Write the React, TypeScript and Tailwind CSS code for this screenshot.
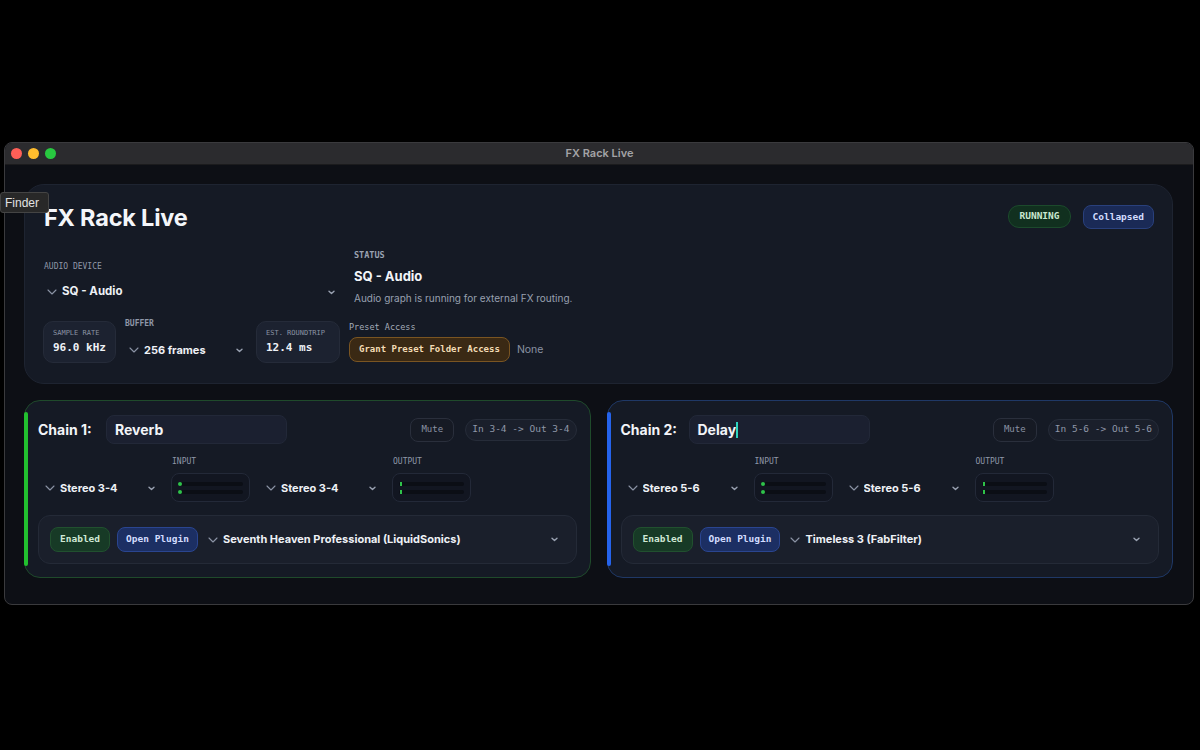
import React from 'react';

const mono = "font-['DejaVu_Sans_Mono',monospace]";

function ChevronLeft() {
  return (
    <svg width="10" height="6" viewBox="0 0 10 6" className="shrink-0">
      <path d="M1 1l4 4 4-4" fill="none" stroke="#8b93a5" strokeWidth="1.1" strokeLinecap="round" strokeLinejoin="round" />
    </svg>
  );
}

function ChevronSmall() {
  return (
    <svg width="7" height="5" viewBox="0 0 7 5" className="shrink-0">
      <path d="M1 1.2l2.5 2.3L6 1.2" fill="none" stroke="#9aa2b2" strokeWidth="1.4" strokeLinecap="round" strokeLinejoin="round" />
    </svg>
  );
}

interface SelectProps {
  value: string;
  className?: string;
  textClass?: string;
}

function Select({ value, className = '', textClass = 'text-[12px]' }: SelectProps) {
  return (
    <div className={`flex items-center gap-[5px] pl-[4px] pr-[4px] h-[26px] ${className}`}>
      <ChevronLeft />
      <span className={`flex-1 font-bold text-[#eef1f6] truncate ${textClass}`}>{value}</span>
      <ChevronSmall />
    </div>
  );
}

function Meter({ label, thin }: { label: string; thin?: boolean }) {
  return (
    <div className="flex flex-col w-[79px]">
      <span className={`${mono} text-[8px] text-[#8f97a8] ml-[1px] mb-[6px] leading-[10px]`}>{label}</span>
      <div className="h-[29px] rounded-lg bg-[#121621] border border-[#232938] flex flex-col justify-center gap-[4px] px-[6px]">
        {[0, 1].map((i) => (
          <div key={i} className="h-[4px] rounded-full bg-[#0b0e15] flex items-center">
            <div className={thin ? 'h-[4px] w-[2px] ml-[1px] bg-[#2fc24a]' : 'h-[4px] w-[4px] rounded-full bg-[#2fc24a]'} />
          </div>
        ))}
      </div>
    </div>
  );
}

interface ChainProps {
  index: number;
  name: string;
  channels: string;
  route: string;
  plugin: string;
  accent: string;
  border: string;
  cursor?: boolean;
}

function ChainCard({ index, name, channels, route, plugin, accent, border, cursor }: ChainProps) {
  return (
    <div className={`flex rounded-2xl bg-[#151a25] border ${border}`}>
      <div className={`w-[4px] my-[11px] -ml-px rounded-full ${accent}`} />
      <div className="flex-1 flex flex-col pl-[10px] pr-[13px] pt-[14px] pb-[13px]">
        <div className="flex items-center">
          <span className="text-[14px] font-bold text-[#f2f4f8] w-[68px]">Chain {index}:</span>
          <div className="w-[181px] h-[29px] rounded-lg bg-[#1b2030] border border-[#222838] flex items-center px-[8px]">
            <span className="text-[14px] font-bold text-[#f2f4f8]">{name}</span>
            {cursor && <span className="w-[2px] h-[16px] bg-[#2dd4bf]" />}
          </div>
          <div className="flex-1" />
          <div className={`${mono} h-[24px] w-[44px] rounded-lg border border-[#2a2f3c] bg-[#161a24] flex items-center justify-center text-[9px] text-[#8a92a3]`}>
            Mute
          </div>
          <div className={`${mono} ml-[11px] h-[22px] px-[6px] rounded-full border border-[#262c39] bg-[#1a1f2b] flex items-center text-[9.5px] text-[#8f97a8]`}>
            {route}
          </div>
        </div>

        <div className="flex items-end gap-[12px] mt-[13px] pl-[3px]">
          <Select value={channels} className="w-[118px] mb-[1px]" textClass="text-[11px]" />
          <Meter label="INPUT" />
          <Select value={channels} className="w-[118px] mb-[1px]" textClass="text-[11px]" />
          <Meter label="OUTPUT" thin />
        </div>

        <div className="mt-[13px] h-[49px] rounded-xl bg-[#1a1f2b] border border-[#242a37] flex items-center pl-[11px] pr-[14px]">
          <div className={`${mono} h-[25px] px-[9px] rounded-lg bg-[#173a26] border border-[#21502f] flex items-center text-[9.5px] font-bold text-[#cfe8d5]`}>
            Enabled
          </div>
          <div className={`${mono} ml-[7px] h-[25px] px-[8px] rounded-lg bg-[#1c2f63] border border-[#2a4590] flex items-center text-[9.5px] font-bold text-[#d3ddff]`}>
            Open Plugin
          </div>
          <Select value={plugin} className="flex-1 ml-[6px]" textClass="text-[11px]" />
        </div>
      </div>
    </div>
  );
}

export default function App() {
  return (
    <div className="relative w-[1200px] h-[750px] bg-black font-['Inter',sans-serif] overflow-hidden">
      <div className="pt-[142px] pl-[4px]">
        <div className="w-[1190px] h-[463px] rounded-lg border border-[#3a3a3d] bg-[#0d0f15] overflow-hidden flex flex-col">
          <div className="relative h-[22px] bg-[#2b2b2e] border-b border-[#1b1b1d] flex items-center px-[6px]">
            <div className="flex gap-[6px]">
              <span className="w-[11px] h-[11px] rounded-full bg-[#fe5f57]" />
              <span className="w-[11px] h-[11px] rounded-full bg-[#febc2e]" />
              <span className="w-[11px] h-[11px] rounded-full bg-[#28c840]" />
            </div>
            <span className="flex-1 text-center text-[11px] font-semibold text-[#a3a3a6] -ml-[44px]">FX Rack Live</span>
          </div>

          <div className="flex-1 pt-[19px] pl-[19px] pr-[20px]">
            <div className="rounded-[20px] bg-[#151a25] border border-[#1e2431] h-[200px] pl-[19px] pr-[18px] pt-[17px]">
              <div className="flex justify-between items-start">
                <h1 className="text-[23.5px] font-bold text-[#f4f6fa] leading-[32px] tracking-[-0.2px]">FX Rack Live</h1>
                <div className="flex gap-[12px] mt-[3px]">
                  <div className={`${mono} h-[23px] px-[10px] rounded-[11px] bg-[#11301f] border border-[#1c4a2c] flex items-center text-[9.5px] font-bold text-[#c9e7cf]`}>
                    RUNNING
                  </div>
                  <div className={`${mono} h-[24px] px-[9px] rounded-lg bg-[#1a2a56] border border-[#29407c] flex items-center text-[9.5px] font-bold text-[#d3ddff]`}>
                    Collapsed
                  </div>
                </div>
              </div>

              <div className="flex items-start mt-[16px]">
                <div className="w-[298px] flex flex-col pt-[12px]">
                  <span className={`${mono} text-[8px] text-[#8f97a8] leading-[10px] mb-[7px]`}>AUDIO DEVICE</span>
                  <Select value="SQ - Audio" className="w-[296px] -ml-[1px]" textClass="text-[11.5px]" />
                </div>
                <div className="ml-[12px] flex flex-col">
                  <span className={`${mono} text-[8.5px] font-bold text-[#9aa2b2] leading-[10px]`}>STATUS</span>
                  <span className="text-[13px] font-bold text-[#f2f4f8] mt-[8px] leading-[16px]">SQ - Audio</span>
                  <span className="text-[10px] text-[#98a0b0] mt-[8px] leading-[13px]">Audio graph is running for external FX routing.</span>
                </div>
              </div>

              <div className="flex items-end gap-[9px] mt-[14px]">
                <div className="w-[73px] h-[42px] -ml-[1px] rounded-[10px] bg-[#1c2230] border border-[#252b39] flex flex-col justify-center px-[9px]">
                  <span className={`${mono} text-[7px] text-[#8a92a3] leading-[9px]`}>SAMPLE RATE</span>
                  <span className={`${mono} text-[11px] font-bold text-[#eef1f6] mt-[3px] leading-[14px]`}>96.0 kHz</span>
                </div>
                <div className="w-[122px] flex flex-col">
                  <span className={`${mono} text-[8px] font-bold text-[#8f97a8] leading-[10px] mb-[8px]`}>BUFFER</span>
                  <Select value="256 frames" textClass="text-[11px]" />
                </div>
                <div className="w-[84px] h-[42px] rounded-[10px] bg-[#1c2230] border border-[#252b39] flex flex-col justify-center px-[9px]">
                  <span className={`${mono} text-[7px] text-[#8a92a3] leading-[9px]`}>EST. ROUNDTRIP</span>
                  <span className={`${mono} text-[11px] font-bold text-[#eef1f6] mt-[3px] leading-[14px]`}>12.4 ms</span>
                </div>
                <div className="flex flex-col mb-[1px]">
                  <span className={`${mono} text-[8.5px] text-[#a3aab8] leading-[10px] mb-[5px]`}>Preset Access</span>
                  <div className="flex items-center">
                    <div className={`${mono} h-[25px] px-[9px] rounded-lg bg-[#3a2914] border border-[#7a5522] flex items-center text-[9px] font-bold text-[#f3dcb4]`}>
                      Grant Preset Folder Access
                    </div>
                    <span className="ml-[7px] text-[10.5px] text-[#8a92a3]">None</span>
                  </div>
                </div>
              </div>
            </div>

            <div className="grid grid-cols-2 gap-4 mt-[16px]">
              <ChainCard
                index={1}
                name="Reverb"
                channels="Stereo 3-4"
                route="In 3-4 -> Out 3-4"
                plugin="Seventh Heaven Professional (LiquidSonics)"
                accent="bg-[#22c02f]"
                border="border-[#1f4a2b]"
              />
              <ChainCard
                index={2}
                name="Delay"
                channels="Stereo 5-6"
                route="In 5-6 -> Out 5-6"
                plugin="Timeless 3 (FabFilter)"
                accent="bg-[#2563eb]"
                border="border-[#1f3866]"
                cursor
              />
            </div>
          </div>
        </div>
      </div>

      <div className="absolute left-0 top-[192px] w-[49px] h-[21px] bg-[#282828] border border-[#444] rounded-[3px] flex items-center pl-[4px] text-[12px] text-[#e2e2e2] font-['Liberation_Sans',sans-serif]">
        Finder
      </div>
    </div>
  );
}
